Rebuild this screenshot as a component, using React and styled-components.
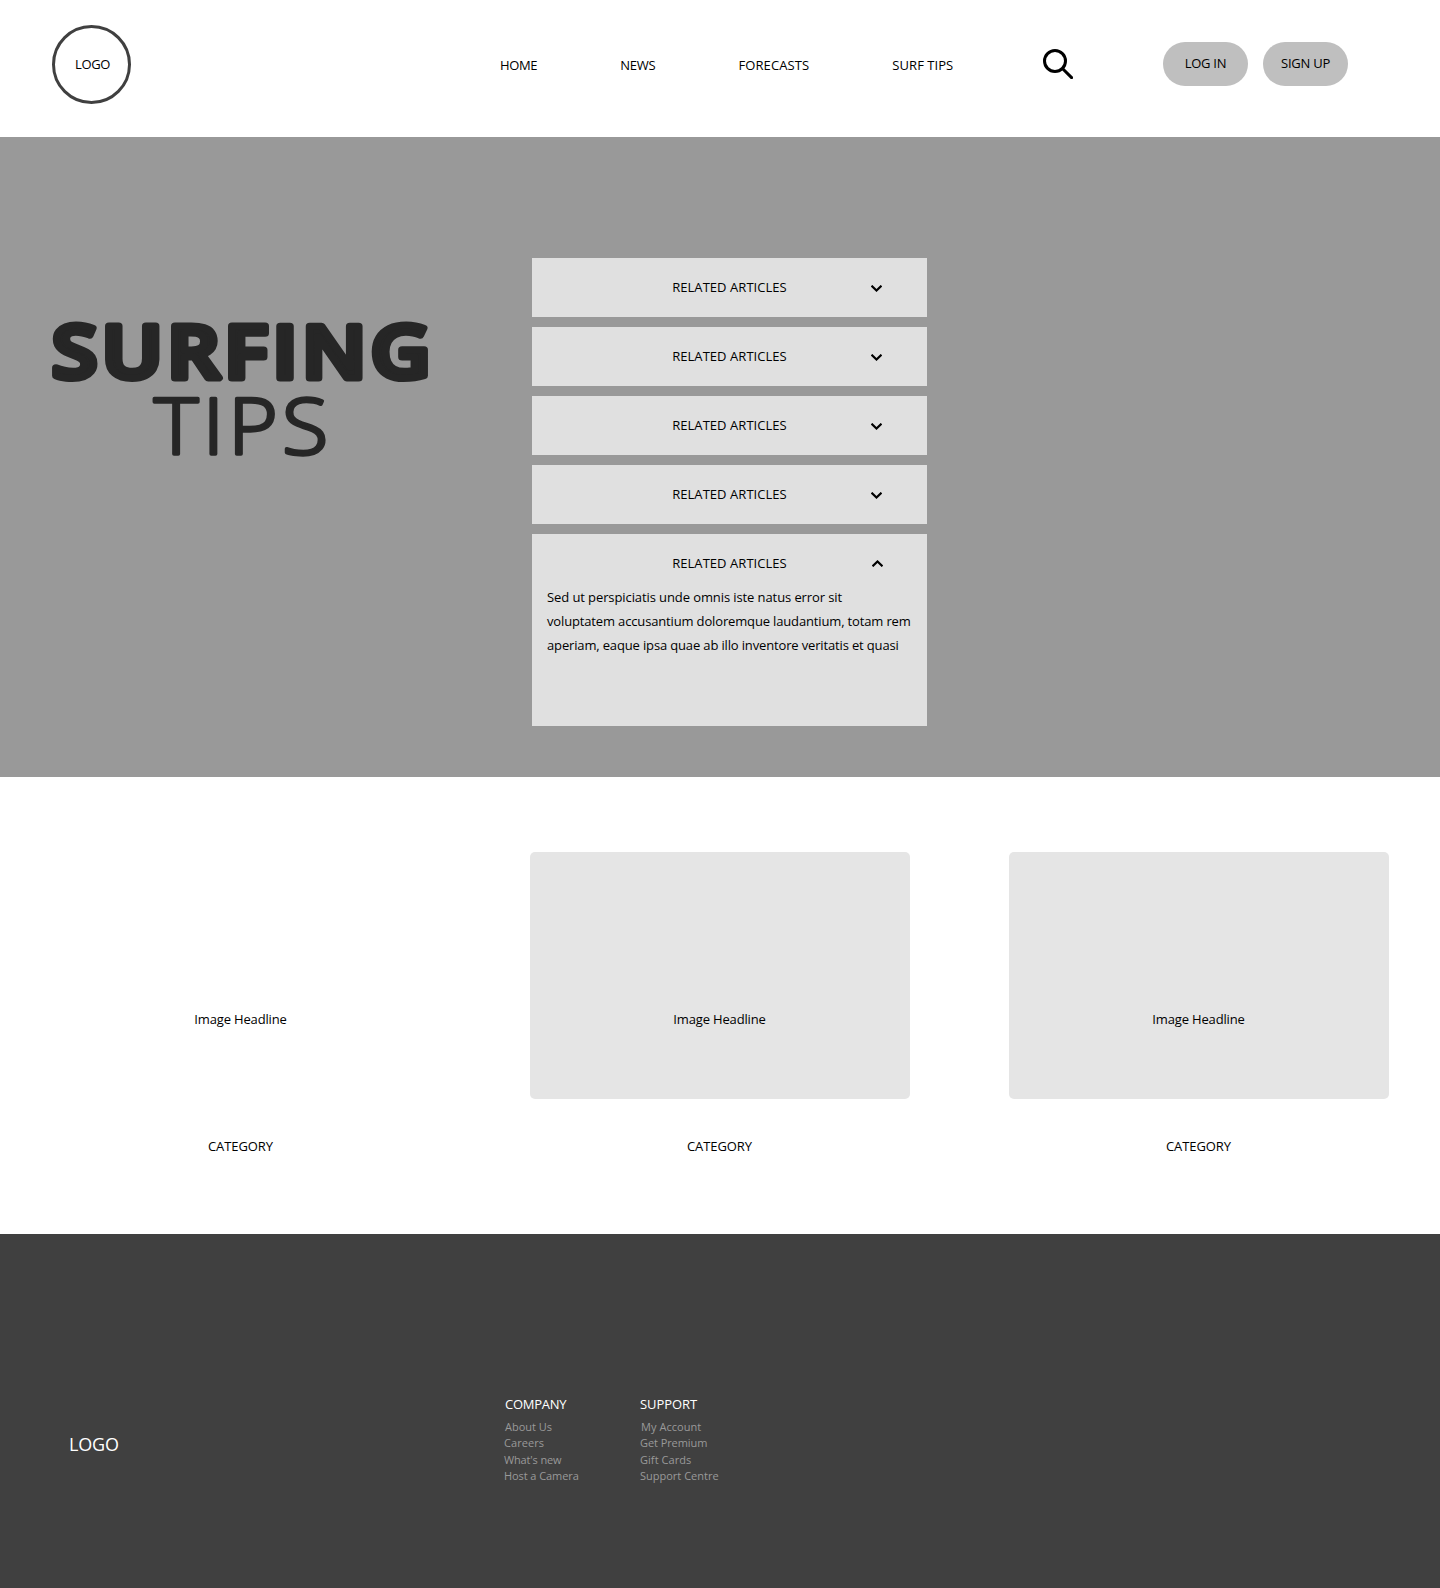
import React from "react";
import styled, { createGlobalStyle } from "styled-components";

const GlobalStyle = createGlobalStyle`
  * { box-sizing: border-box; }
  body {
    margin: 0;
    background: #fff;
    color: #000;
    font: 13px/20px "Open Sans", "Noto Sans", sans-serif;
  }
  h1, h2, p, ul { margin: 0; padding: 0; }
  ul { list-style: none; }
  a { color: inherit; text-decoration: none; }
`;

const Page = styled.div`
  width: 1440px;
  overflow: hidden;
`;

const Text = styled.span`
  white-space: nowrap;
  letter-spacing: ${(p) => p.$track || 0}px;
`;

const BaseButton = styled.button`
  border: 0;
  padding: 0;
  background: none;
  color: inherit;
  font: inherit;
  cursor: pointer;
`;

const Header = styled.header`
  display: flex;
  align-items: flex-start;
  height: 137px;
  padding-left: 52px;
`;

const LogoCircle = styled.a`
  display: flex;
  align-items: center;
  justify-content: center;
  width: 79px;
  height: 79px;
  margin-top: 25px;
  padding: 0 0 1px 2px;
  border: 3px solid #404040;
  border-radius: 50%;
`;

const Nav = styled.nav`
  display: flex;
  gap: 83px;
  margin: 55px 0 0 369px;
`;

const SearchButton = styled(BaseButton)`
  display: flex;
  margin: 49px 0 0 auto;
`;

const Actions = styled.div`
  display: flex;
  gap: 15px;
  margin: 42px 92px 0 90px;
`;

const PillButton = styled(BaseButton)`
  width: 85px;
  height: 44px;
  padding-bottom: 2px;
  border-radius: 22px;
  background: #bfbfbf;
`;

const Hero = styled.section`
  display: flex;
  align-items: flex-start;
  height: 640px;
  background: #999;
`;

const Title = styled.h1`
  width: 480px;
  margin: 155px 52px 0 0;
  line-height: 0;
`;

const TitleArt = styled.svg`
  fill: #262626;
  stroke: #262626;
  stroke-linejoin: round;
`;

const TitleStrong = styled.text`
  font-weight: 600;
  font-size: 73px;
  letter-spacing: 4px;
  stroke-width: 7px;
`;

const TitleLight = styled.text`
  font-weight: 300;
  font-size: 78px;
  letter-spacing: 4px;
  stroke-width: 3.4px;
`;

const Accordion = styled.div`
  display: flex;
  flex-direction: column;
  gap: 10px;
  width: 395px;
  margin-top: 121px;
`;

const Panel = styled.article`
  height: ${(p) => (p.$open ? 192 : 59)}px;
  background: #e0e0e0;
`;

const PanelHeader = styled(BaseButton)`
  display: grid;
  grid-template-columns: 1fr auto 1fr;
  align-items: center;
  width: 100%;
  height: 59px;
  padding-bottom: 1px;
`;

const ChevronIcon = styled.svg`
  grid-column: 3;
  justify-self: end;
  margin: ${(p) => (p.$open ? "0 44px 0 0" : "2px 45px 0 0")};
`;

const PanelTitle = styled(Text)`
  grid-column: 2;
`;

const PanelBody = styled.p`
  display: flex;
  flex-direction: column;
  margin-top: -8px;
  padding-left: 15px;
  line-height: 24px;
`;

const Cards = styled.section`
  display: grid;
  grid-template-columns: repeat(3, 380px);
  column-gap: 99px;
  height: 457px;
  padding: 75px 0 0 51px;
  text-align: center;
`;

const CardImage = styled.div`
  height: 247px;
  padding: 157px 1px 0 0;
  border-radius: 5px;
  background: ${(p) => (p.$blank ? "transparent" : "#e5e5e5")};
`;

const CardCategory = styled.h2`
  margin-top: 37px;
  padding-right: 1px;
  font-size: 13px;
  font-weight: 400;
`;

const Footer = styled.footer`
  display: flex;
  align-items: flex-start;
  height: 354px;
  padding: 160px 0 0 69px;
  background: #404040;
  color: #fff;
`;

const FooterLogo = styled.a`
  width: 435px;
  margin-top: 38px;
  font-size: 18px;
  line-height: 24px;
`;

const FooterColumn = styled.div`
  width: 136px;
`;

const ColumnTitle = styled(Text)`
  padding-left: ${(p) => p.$indent || 0}px;
`;

const LinkList = styled.ul`
  margin-top: 5px;
  color: #999;
  font-size: 11px;
  line-height: 16.33px;

  li:first-child { padding-left: 1px; }
  li { height: 16.33px; }
`;

function Search() {
  return (
    <svg width="30" height="30" viewBox="0 0 30 30" fill="none" stroke="#000" strokeWidth="3">
      <circle cx="12" cy="12" r="10.5" />
      <path d="M19.7 19.7 L28.6 28.6" strokeLinecap="round" />
    </svg>
  );
}

function Chevron({ open }) {
  return (
    <ChevronIcon $open={open} width="11" height="7" viewBox="0 0 11 7" fill="none" stroke="#000" strokeWidth="2.2">
      <path d={open ? "M0.5 6.3 L5.5 1.5 L10.5 6.3" : "M0.5 0.7 L5.5 5.5 L10.5 0.7"} />
    </ChevronIcon>
  );
}

const navItems = [
  ["HOME", -0.35],
  ["NEWS", -0.25],
  ["FORECASTS", 0.12],
  ["SURF TIPS", 0.05],
];

const panels = [false, false, false, false, true];

const bodyLines = [
  ["Sed ut perspiciatis unde omnis iste natus error sit", -0.095],
  ["voluptatem accusantium doloremque laudantium, totam rem", -0.15],
  ["aperiam, eaque ipsa quae ab illo inventore veritatis et quasi", -0.15],
];

const columns = [
  {
    title: "COMPANY",
    track: -0.25,
    indent: 1,
    links: [["About Us", 0], ["Careers", 0.08], ["What's new", -0.15], ["Host a Camera", -0.08]],
  },
  {
    title: "SUPPORT",
    track: -0.05,
    indent: 0,
    links: [["My Account", 0.05], ["Get Premium", -0.08], ["Gift Cards", 0.05], ["Support Centre", 0]],
  },
];

export default function App() {
  return (
    <Page>
      <GlobalStyle />
      <Header>
        <LogoCircle href="#"><Text $track={-0.4}>LOGO</Text></LogoCircle>
        <Nav>
          {navItems.map(([label, track]) => (
            <a href="#" key={label}><Text $track={track}>{label}</Text></a>
          ))}
        </Nav>
        <SearchButton aria-label="Search"><Search /></SearchButton>
        <Actions>
          <PillButton><Text $track={-0.3}>LOG IN</Text></PillButton>
          <PillButton><Text $track={-0.25}>SIGN UP</Text></PillButton>
        </Actions>
      </Header>

      <Hero>
        <Title>
          <TitleArt width="480" height="192" viewBox="0 0 480 192">
            <TitleStrong x="52" y="85.5" textLength="383" lengthAdjust="spacingAndGlyphs">SURFING</TitleStrong>
            <TitleLight x="154" y="161.6" textLength="178.5" lengthAdjust="spacingAndGlyphs">TIPS</TitleLight>
          </TitleArt>
        </Title>
        <Accordion>
          {panels.map((open, i) => (
            <Panel key={i} $open={open}>
              <PanelHeader aria-expanded={open}>
                <PanelTitle $track={0.05}>RELATED ARTICLES</PanelTitle>
                <Chevron open={open} />
              </PanelHeader>
              {open && (
                <PanelBody>
                  {bodyLines.map(([line, track]) => <Text key={line} $track={track}>{line}</Text>)}
                </PanelBody>
              )}
            </Panel>
          ))}
        </Accordion>
      </Hero>

      <Cards>
        {[true, false, false].map((blank, i) => (
          <article key={i}>
            <CardImage $blank={blank}><Text $track={-0.15}>Image Headline</Text></CardImage>
            <CardCategory><Text $track={-0.08}>CATEGORY</Text></CardCategory>
          </article>
        ))}
      </Cards>

      <Footer>
        <FooterLogo href="#"><Text $track={-0.15}>LOGO</Text></FooterLogo>
        {columns.map(({ title, track, indent, links }) => (
          <FooterColumn key={title}>
            <ColumnTitle $track={track} $indent={indent}>{title}</ColumnTitle>
            <LinkList>
              {links.map(([label, t]) => (
                <li key={label}><a href="#"><Text $track={t}>{label}</Text></a></li>
              ))}
            </LinkList>
          </FooterColumn>
        ))}
      </Footer>
    </Page>
  );
}
